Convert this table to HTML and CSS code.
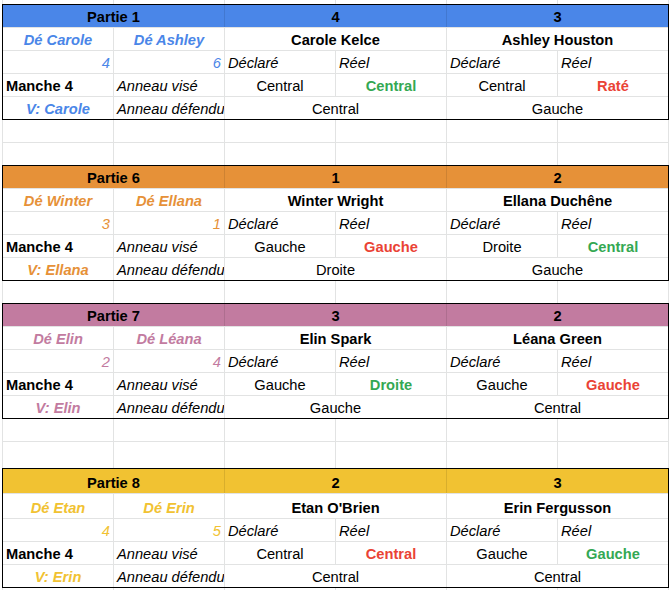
FILE: index.html
```html
<!DOCTYPE html>
<html lang="fr">
<head>
<meta charset="utf-8">
<title>Parties</title>
<link rel="stylesheet" href="styles.css">
</head>
<body>
<div class="sheet">
  <div class="grid empty top"><div class="c"></div><div class="c"></div><div class="c"></div><div class="c"></div><div class="c"></div><div class="c"></div></div>

  <section class="grid block blue">
    <div class="c h s2">Partie 1</div><div class="c h s2">4</div><div class="c h s2 end">3</div>
    <div class="c ctr b i acc">Dé Carole</div><div class="c ctr b i acc">Dé Ashley</div><div class="c ctr b s2">Carole Kelce</div><div class="c ctr b s2">Ashley Houston</div>
    <div class="c rt i acc">4</div><div class="c rt i acc">6</div><div class="c i">Déclaré</div><div class="c i">Réel</div><div class="c i">Déclaré</div><div class="c i">Réel</div>
    <div class="c b">Manche 4</div><div class="c i">Anneau visé</div><div class="c ctr">Central</div><div class="c ctr b ok">Central</div><div class="c ctr">Central</div><div class="c ctr b ko">Raté</div>
    <div class="c ctr b i acc">V: Carole</div><div class="c i">Anneau défendu</div><div class="c ctr s2">Central</div><div class="c ctr s2">Gauche</div>
  </section>

  <div class="grid empty two"><div class="c"></div><div class="c"></div><div class="c"></div><div class="c"></div><div class="c"></div><div class="c"></div><div class="c"></div><div class="c"></div><div class="c"></div><div class="c"></div><div class="c"></div><div class="c"></div></div>

  <section class="grid block orange">
    <div class="c h s2">Partie 6</div><div class="c h s2">1</div><div class="c h s2 end">2</div>
    <div class="c ctr b i acc">Dé Winter</div><div class="c ctr b i acc">Dé Ellana</div><div class="c ctr b s2">Winter Wright</div><div class="c ctr b s2">Ellana Duchêne</div>
    <div class="c rt i acc">3</div><div class="c rt i acc">1</div><div class="c i">Déclaré</div><div class="c i">Réel</div><div class="c i">Déclaré</div><div class="c i">Réel</div>
    <div class="c b">Manche 4</div><div class="c i">Anneau visé</div><div class="c ctr">Gauche</div><div class="c ctr b ko">Gauche</div><div class="c ctr">Droite</div><div class="c ctr b ok">Central</div>
    <div class="c ctr b i acc">V: Ellana</div><div class="c i">Anneau défendu</div><div class="c ctr s2">Droite</div><div class="c ctr s2">Gauche</div>
  </section>

  <div class="grid empty one"><div class="c"></div><div class="c"></div><div class="c"></div><div class="c"></div><div class="c"></div><div class="c"></div></div>

  <section class="grid block pink">
    <div class="c h s2">Partie 7</div><div class="c h s2">3</div><div class="c h s2 end">2</div>
    <div class="c ctr b i acc">Dé Elin</div><div class="c ctr b i acc">Dé Léana</div><div class="c ctr b s2">Elin Spark</div><div class="c ctr b s2">Léana Green</div>
    <div class="c rt i acc">2</div><div class="c rt i acc">4</div><div class="c i">Déclaré</div><div class="c i">Réel</div><div class="c i">Déclaré</div><div class="c i">Réel</div>
    <div class="c b">Manche 4</div><div class="c i">Anneau visé</div><div class="c ctr">Gauche</div><div class="c ctr b ok">Droite</div><div class="c ctr">Gauche</div><div class="c ctr b ko">Gauche</div>
    <div class="c ctr b i acc">V: Elin</div><div class="c i">Anneau défendu</div><div class="c ctr s2">Gauche</div><div class="c ctr s2">Central</div>
  </section>

  <div class="grid empty two wide"><div class="c"></div><div class="c"></div><div class="c"></div><div class="c"></div><div class="c"></div><div class="c"></div><div class="c"></div><div class="c"></div><div class="c"></div><div class="c"></div><div class="c"></div><div class="c"></div></div>

  <section class="grid block yellow tall">
    <div class="c h s2">Partie 8</div><div class="c h s2">2</div><div class="c h s2 end">3</div>
    <div class="c ctr b i acc">Dé Etan</div><div class="c ctr b i acc">Dé Erin</div><div class="c ctr b s2">Etan O'Brien</div><div class="c ctr b s2">Erin Fergusson</div>
    <div class="c rt i acc">4</div><div class="c rt i acc">5</div><div class="c i">Déclaré</div><div class="c i">Réel</div><div class="c i">Déclaré</div><div class="c i">Réel</div>
    <div class="c b">Manche 4</div><div class="c i">Anneau visé</div><div class="c ctr">Central</div><div class="c ctr b ko">Central</div><div class="c ctr">Gauche</div><div class="c ctr b ok">Gauche</div>
    <div class="c ctr b i acc">V: Erin</div><div class="c i">Anneau défendu</div><div class="c ctr s2">Central</div><div class="c ctr s2">Central</div>
  </section>

  <div class="grid empty bottom"><div class="c"></div><div class="c"></div><div class="c"></div><div class="c"></div><div class="c"></div><div class="c"></div></div>
</div>
</body>
</html>
```
FILE: styles.css
```css
* { box-sizing: border-box; }

body {
  margin: 0;
  background: #fff;
  font-family: "Liberation Sans", Arial, sans-serif;
  font-size: 14.67px;
  color: #000;
}

.sheet {
  margin-left: 2px;
  width: 667px;
}

.grid {
  display: grid;
  grid-template-columns: repeat(6, 110px);
  column-gap: 1px;
  row-gap: 1px;
  background: #e2e3e3;
}

.empty {
  border-left: 1px solid #e2e3e3;
  border-right: 1px solid #e2e3e3;
}

.empty.top { grid-template-rows: 4px; }
.empty.one { grid-template-rows: 22px; }
.empty.two { grid-template-rows: 22px 22px; }
.empty.two.wide { grid-template-rows: 22px 26px; }
.empty.bottom { grid-template-rows: 3px; }

.block {
  border: 1px solid #000;
  grid-template-rows: 22px 22px 22px 22px 22px;
}

.block.tall { grid-template-rows: 24px 24px 22px 22px 22px; }

.blue { --accent: #4a86e8; }
.orange { --accent: #e69138; }
.pink { --accent: #c27ba0; }
.yellow { --accent: #f1c232; }

.c {
  background: #fff;
  display: flex;
  align-items: flex-end;
  padding: 0 3px 1px;
  line-height: 17px;
  white-space: nowrap;
  overflow: hidden;
  min-width: 0;
}

.s2 { grid-column: span 2; }
.ctr { justify-content: center; }
.rt { justify-content: flex-end; }
.b { font-weight: bold; }
.i { font-style: italic; }
.acc { color: var(--accent); }
.ok { color: #34a853; }
.ko { color: #ea4335; }

.h {
  background: var(--accent);
  font-weight: bold;
  justify-content: center;
  margin-right: -1px;
  border-right: 1px solid rgba(0, 0, 0, 0.1);
}

.h.end {
  margin-right: 0;
  border-right: 0;
}
```
